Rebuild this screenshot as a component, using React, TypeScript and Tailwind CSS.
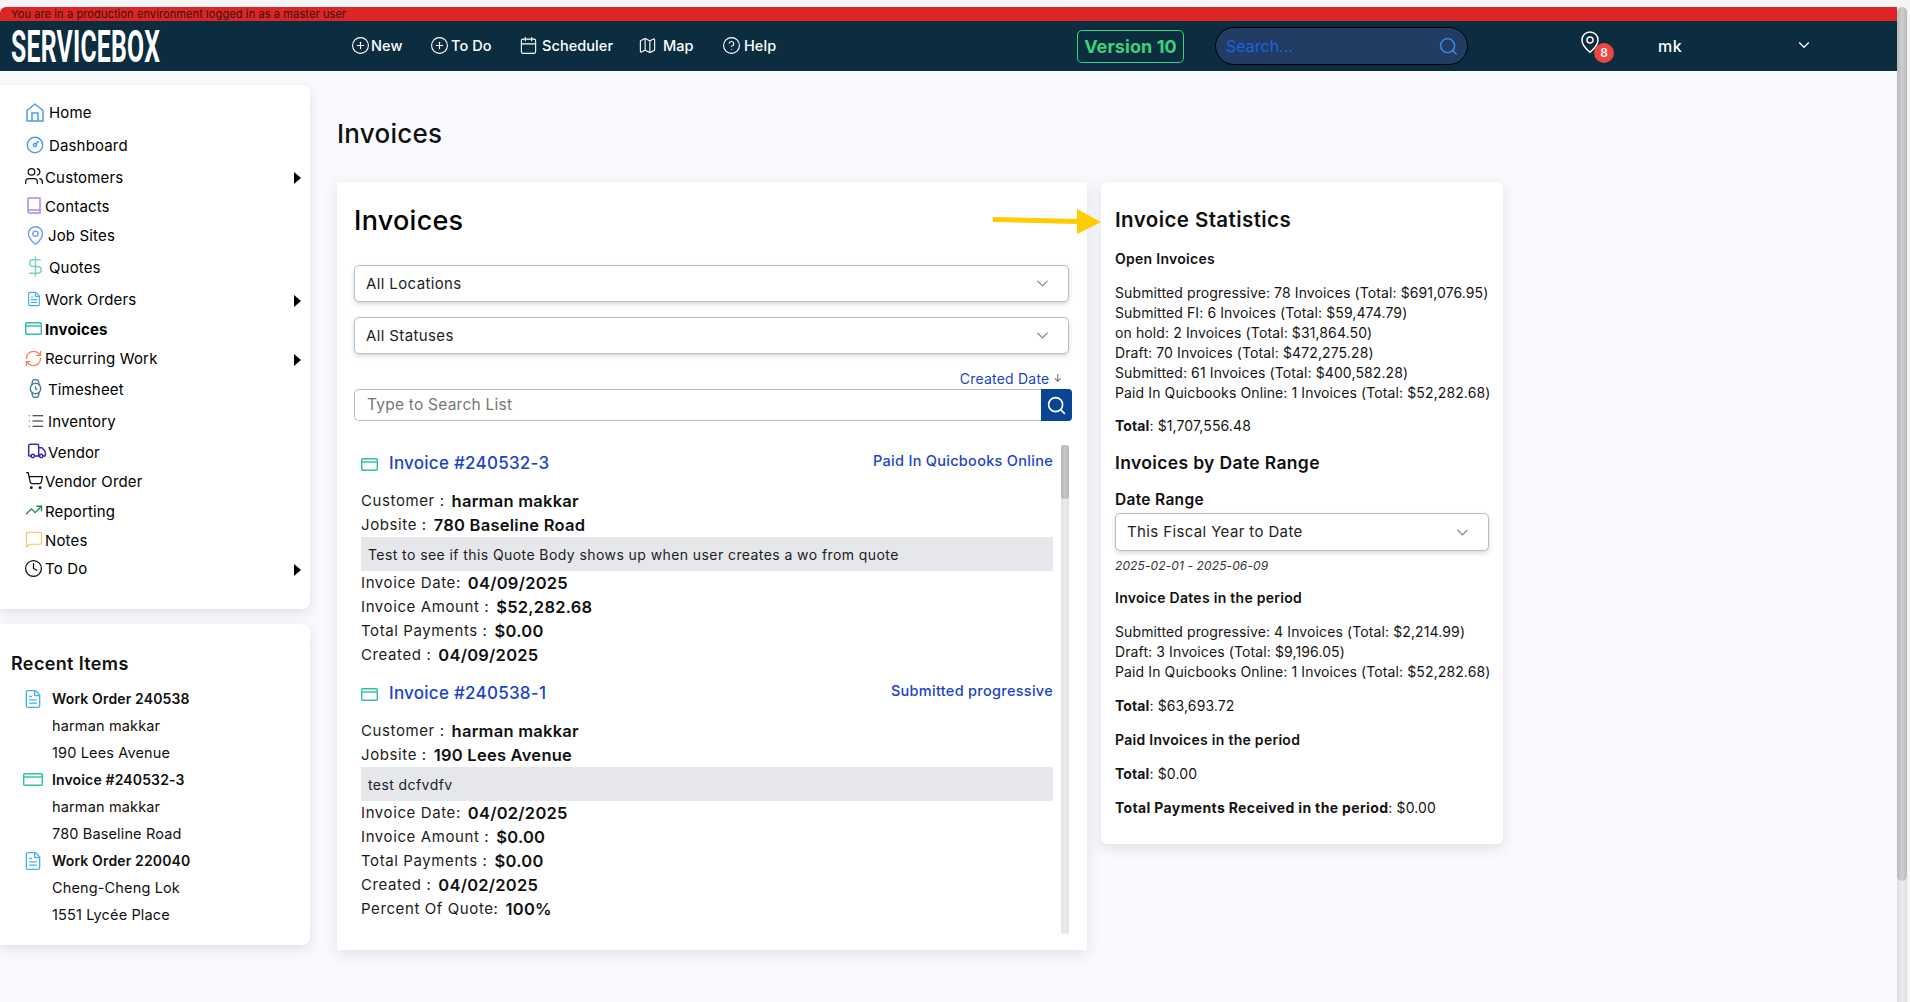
import {
  ChevronDown,
  CircleHelp,
  Calendar,
  Clock,
  DollarSign,
  FileText,
  List,
  Map as MapIcon,
  MapPin,
  MessageSquare,
  PlusCircle,
  RefreshCw,
  Search,
  ShoppingCart,
  TrendingUp,
  Truck,
  Users,
  Watch,
} from "lucide-react";
import type { ReactNode } from "react";

function HomeIcon() {
  return (
    <svg width="18" height="19" viewBox="0 0 18 19" fill="none" stroke="#4b9bf0" strokeWidth="1.5">
      <path d="M1 7.5 9 1l8 6.5V18H1z" strokeLinejoin="round" />
      <path d="M6 18v-8h6v8" />
    </svg>
  );
}

function GaugeIcon() {
  return (
    <svg width="18" height="18" viewBox="0 0 18 18" fill="none" stroke="#4b9bf0" strokeWidth="1.5">
      <circle cx="9" cy="9" r="7.7" />
      <circle cx="9" cy="9" r="1.6" />
      <path d="m10 8 2.5-3" />
    </svg>
  );
}

function BookIcon() {
  return (
    <svg width="14" height="17" viewBox="0 0 14 17" fill="none" stroke="#a78bea" strokeWidth="1.5">
      <path d="M1 13.5V2a1 1 0 0 1 1-1h11v15H2.6A1.6 1.6 0 0 1 1 14.2zM1 13h12" />
    </svg>
  );
}

function CardIcon({ w = 17 }: { w?: number }) {
  return (
    <svg width={w} height="13" viewBox={`0 0 ${w} 13`} fill="none" stroke="#2cc2a0" strokeWidth="1.4">
      <rect x="0.7" y="0.7" width={w - 1.4} height="11.6" rx="1" />
      <path d={`M1 4h${w - 2}`} />
    </svg>
  );
}

function Caret() {
  return (
    <svg width="7" height="12" viewBox="0 0 7 12" fill="#000">
      <path d="M0 0l7 6-7 6z" />
    </svg>
  );
}

type NavRow = { label: string; icon: ReactNode; h: string; iconBox: string; caret?: boolean; bold?: boolean };

const navRows: NavRow[] = [
  { label: "Home", icon: <HomeIcon />, h: "h-[33px]", iconBox: "w-[49px] pl-[26px] -mt-[3px]" },
  { label: "Dashboard", icon: <GaugeIcon />, h: "h-[33px]", iconBox: "w-[49px] pl-[26px] -mt-[3px]" },
  { label: "Customers", icon: <Users size={20} color="#111" strokeWidth={1.5} />, h: "h-[30px]", iconBox: "w-[45px] pl-[24px] -mt-[5px]", caret: true },
  { label: "Contacts", icon: <BookIcon />, h: "h-[28px]", iconBox: "w-[45px] pl-[27px] -mt-[3px]" },
  { label: "Job Sites", icon: <MapPin size={21} color="#6d9cf0" strokeWidth={1.6} />, h: "h-[31px]", iconBox: "w-[48px] pl-[25px] -mt-[3px]" },
  { label: "Quotes", icon: <DollarSign size={23} color="#74d6b8" strokeWidth={1.5} />, h: "h-[33px]", iconBox: "w-[49px] pl-[24px] -mt-[5px]" },
  { label: "Work Orders", icon: <FileText size={16} color="#40b0f5" strokeWidth={1.7} />, h: "h-[31px]", iconBox: "w-[45px] pl-[26px] -mt-[3px]", caret: true },
  { label: "Invoices", icon: <CardIcon />, h: "h-[29px]", iconBox: "w-[45px] pl-[25px] -mt-[4px]", bold: true },
  { label: "Recurring Work", icon: <RefreshCw size={19} color="#fa8260" strokeWidth={1.6} />, h: "h-[29px]", iconBox: "w-[45px] pl-[24px] -mt-[3px]", caret: true },
  { label: "Timesheet", icon: <Watch size={21} color="#4b7f96" strokeWidth={1.6} />, h: "h-[32px]", iconBox: "w-[48px] pl-[25px] -mt-[3px]" },
  { label: "Inventory", icon: <List size={18} color="#222" strokeWidth={1.6} />, h: "h-[32px]", iconBox: "w-[48px] pl-[27px] -mt-[3px]" },
  { label: "Vendor", icon: <Truck size={20} color="#3b2aa8" strokeWidth={1.8} />, h: "h-[30px]", iconBox: "w-[48px] pl-[27px] -mt-[4px]" },
  { label: "Vendor Order", icon: <ShoppingCart size={19} color="#111" strokeWidth={1.6} />, h: "h-[29px]", iconBox: "w-[45px] pl-[25px] -mt-[4px]" },
  { label: "Reporting", icon: <TrendingUp size={18} color="#1f8a5a" strokeWidth={1.8} />, h: "h-[30px]", iconBox: "w-[45px] pl-[25px] -mt-[5px]" },
  { label: "Notes", icon: <MessageSquare size={18} color="#f7bf5e" strokeWidth={1.6} />, h: "h-[28px]", iconBox: "w-[45px] pl-[25px] -mt-[4px]" },
  { label: "To Do", icon: <Clock size={19} color="#111" strokeWidth={1.6} />, h: "h-[29px]", iconBox: "w-[45px] pl-[24px] -mt-[3px]", caret: true },
];

const headerLinks = [
  { label: "New", icon: <PlusCircle size={19} strokeWidth={1.4} />, cls: "w-[79px] gap-[1px]" },
  { label: "To Do", icon: <PlusCircle size={19} strokeWidth={1.4} />, cls: "w-[89px] gap-[2px]" },
  { label: "Scheduler", icon: <Calendar size={19} strokeWidth={1.4} />, cls: "w-[119px] gap-[4px]" },
  { label: "Map", icon: <MapIcon size={19} strokeWidth={1.4} />, cls: "w-[84px] gap-[6px]" },
  { label: "Help", icon: <CircleHelp size={19} strokeWidth={1.4} />, cls: "w-[60px] gap-[3px]" },
];

const recent = [
  { title: "Work Order 240538", kind: "wo", lines: ["harman makkar", "190 Lees Avenue"] },
  { title: "Invoice #240532-3", kind: "inv", lines: ["harman makkar", "780 Baseline Road"] },
  { title: "Work Order 220040", kind: "wo", lines: ["Cheng-Cheng Lok", "1551 Lycée Place"] },
];

const openStats = [
  "Submitted progressive: 78 Invoices (Total: $691,076.95)",
  "Submitted FI: 6 Invoices (Total: $59,474.79)",
  "on hold: 2 Invoices (Total: $31,864.50)",
  "Draft: 70 Invoices (Total: $472,275.28)",
  "Submitted: 61 Invoices (Total: $400,582.28)",
  "Paid In Quicbooks Online: 1 Invoices (Total: $52,282.68)",
];

const periodStats = [
  "Submitted progressive: 4 Invoices (Total: $2,214.99)",
  "Draft: 3 Invoices (Total: $9,196.05)",
  "Paid In Quicbooks Online: 1 Invoices (Total: $52,282.68)",
];

function Field({ label, value }: { label: string; value: string }) {
  return (
    <div className="flex h-[24px] items-center gap-[7px] text-[15px] tracking-[0.04em] text-[#1c1c1c]">
      <span>{label}</span>
      <span className="text-[16.5px] font-semibold tracking-[0.015em] text-[#111]">{value}</span>
    </div>
  );
}

function Invoice(props: {
  number: string;
  status: string;
  customer: string;
  jobsite: string;
  note: string;
  date: string;
  amount: string;
  created: string;
  percent?: string;
}) {
  return (
    <div className="mb-[8px]">
      <div className="flex h-[38px] items-center justify-between">
        <div className="flex items-center gap-[11px]">
          <CardIcon />
          <span className="text-[17px] font-medium tracking-[0.015em] text-[#1a44c8]">Invoice #{props.number}</span>
        </div>
        <span className="-mt-[7px] text-[14.5px] font-medium tracking-[0.02em] text-[#1a44c8]">{props.status}</span>
      </div>
      <div className="mt-[6px]">
        <Field label="Customer :" value={props.customer} />
        <Field label="Jobsite :" value={props.jobsite} />
      </div>
      <div className="flex h-[34px] items-center bg-[#e5e7eb] pl-[7px] text-[14px] tracking-[0.03em] text-[#1c1c1c]">
        {props.note}
      </div>
      <Field label="Invoice Date:" value={props.date} />
      <Field label="Invoice Amount :" value={props.amount} />
      <Field label="Total Payments :" value="$0.00" />
      <Field label="Created :" value={props.created} />
      {props.percent && <Field label="Percent Of Quote:" value={props.percent} />}
    </div>
  );
}

function SelectBox({ label, cls }: { label: string; cls: string }) {
  return (
    <div className={`flex items-center justify-between rounded-[5px] border border-[#b4c0c8] bg-white pl-[11px] pr-[16px] text-[15px] tracking-[0.025em] text-[#222] shadow-[0_2px_5px_rgba(0,0,0,0.16)] ${cls}`}>
      <span className="pt-[1px]">{label}</span>
      <ChevronDown size={19} color="#7a8288" strokeWidth={1.5} />
    </div>
  );
}

export default function App() {
  return (
    <div className="flex h-[1002px] flex-col overflow-hidden bg-[#f4f4f4] font-['Inter',sans-serif]">
      <div className="h-[7px] shrink-0" />
      <div className="flex min-h-0 flex-1">
        <div className="flex min-w-0 flex-1 flex-col bg-[#f9fafd]">
          <div className="flex h-[14px] items-center rounded-tl-[6px] bg-[#dc2626] pl-[11px] text-[11px] leading-none tracking-[0.01em] text-[#3a1010]">
            You are in a production environment logged in as a master user
          </div>
          <header className="flex h-[50px] items-center bg-[#0c2d40] text-white">
            <div className="ml-[11px] w-[340px] origin-left scale-x-[0.55] font-['Roboto',sans-serif] text-[45px] font-bold leading-none tracking-[0.01em]">
              SERVICEBOX
            </div>
            <nav className="flex items-center">
              {headerLinks.map((link) => (
                <div key={link.label} className={`flex items-center text-[14.5px] font-medium tracking-[0.005em] ${link.cls}`}>
                  <span className="-mt-[2px]">{link.icon}</span>
                  {link.label}
                </div>
              ))}
            </nav>
            <div className="ml-[295px] flex h-[33px] w-[107px] items-center justify-center rounded-[5px] border border-[#3bd37a] text-[18px] font-bold tracking-[0.005em] text-[#3bd37a]">
              Version 10
            </div>
            <div className="ml-[31px] flex h-[38px] w-[253px] items-center justify-between rounded-full border border-black bg-[#223c63] pl-[10px] pr-[8px] text-[16px] text-[#1d63e0]">
              <span>Search...</span>
              <Search size={21} color="#3b8fe8" strokeWidth={1.6} />
            </div>
            <div className="relative ml-[112px] h-[24px] w-[20px]">
              <MapPin size={24} strokeWidth={1.5} className="-ml-[2px] -mt-[4px]" />
              <span className="absolute left-[14px] top-[9px] flex h-[20px] w-[20px] items-center justify-center rounded-full bg-[#ef4444] text-[12px] font-semibold">
                8
              </span>
            </div>
            <span className="ml-[58px] text-[16px] font-medium tracking-[0.03em]">mk</span>
            <ChevronDown size={18} strokeWidth={1.6} className="-mt-[3px] ml-[113px]" />
          </header>

          <div className="flex min-h-0 flex-1">
            <aside className="w-[310px] shrink-0 pt-[14px]">
              <div className="h-[524px] rounded-r-[8px] bg-white pt-[12px] shadow-[0_4px_12px_rgba(30,40,70,0.12)]">
                {navRows.map((row) => (
                  <div key={row.label} className={`flex items-center pr-[9px] text-[15px] tracking-[0.01em] text-black ${row.h} ${row.bold ? "font-bold" : ""}`}>
                    <span className={`shrink-0 ${row.iconBox}`}>{row.icon}</span>
                    <span className="flex-1">{row.label}</span>
                    {row.caret && <Caret />}
                  </div>
                ))}
              </div>
              <div className="mt-[15px] h-[321px] rounded-r-[8px] bg-white pt-[27px] shadow-[0_4px_12px_rgba(30,40,70,0.12)]">
                <h3 className="pl-[11px] text-[18px] font-semibold leading-[26px] tracking-[0.02em] text-[#111]">Recent Items</h3>
                <div className="mt-[8px]">
                  {recent.map((item) => (
                    <div key={item.title} className="text-[14.5px] tracking-[0.01em] text-[#111]">
                      <div className="flex h-[27px] items-center text-[14px] font-semibold">
                        <span className="flex w-[52px] justify-end pr-[9px]">
                          {item.kind === "wo" ? (
                            <FileText size={20} color="#40b0f5" strokeWidth={1.6} />
                          ) : (
                            <CardIcon w={20} />
                          )}
                        </span>
                        {item.title}
                      </div>
                      {item.lines.map((line) => (
                        <div key={line} className="flex h-[27px] items-center pl-[52px]">{line}</div>
                      ))}
                    </div>
                  ))}
                </div>
              </div>
            </aside>

            <main className="min-w-0 flex-1 pl-[27px]">
              <h1 className="flex h-[111px] items-center pt-[14px] text-[26px] font-medium tracking-[0.01em] text-[#111]">Invoices</h1>
              <div className="flex items-start gap-[14px]">
                <section className="h-[768px] w-[750px] bg-white pl-[17px] pr-[18px] shadow-[0_4px_14px_rgba(30,40,70,0.12)]">
                  <h2 className="flex h-[83px] items-center pb-[4px] text-[27px] font-medium tracking-[0.01em] text-black">Invoices</h2>
                  <SelectBox label="All Locations" cls="h-[37px]" />
                  <SelectBox label="All Statuses" cls="mt-[15px] h-[37px]" />
                  <div className="mt-[14px] flex h-[21px] items-center justify-end pr-[7px] text-[14px] tracking-[0.015em] text-[#1a44c8]">
                    Created Date <span className="ml-[4px] text-[10px] text-[#555]">↓</span>
                  </div>
                  <div className="-mr-[3px] flex h-[32px] items-stretch">
                    <div className="flex flex-1 items-center rounded-l-[5px] border border-r-0 border-[#b4c0c8] pl-[12px] text-[15.5px] tracking-[0.015em] text-[#777]">
                      Type to Search List
                    </div>
                    <div className="flex w-[31px] items-center justify-center rounded-r-[4px] bg-[#0a4595]">
                      <Search size={21} color="#fff" strokeWidth={1.8} />
                    </div>
                  </div>
                  <div className="mt-[24px] flex h-[489px] gap-[8px]">
                    <div className="ml-[7px] flex-1">
                      <Invoice
                        number="240532-3"
                        status="Paid In Quicbooks Online"
                        customer="harman makkar"
                        jobsite="780 Baseline Road"
                        note="Test to see if this Quote Body shows up when user creates a wo from quote"
                        date="04/09/2025"
                        amount="$52,282.68"
                        created="04/09/2025"
                      />
                      <Invoice
                        number="240538-1"
                        status="Submitted progressive"
                        customer="harman makkar"
                        jobsite="190 Lees Avenue"
                        note="test dcfvdfv"
                        date="04/02/2025"
                        amount="$0.00"
                        created="04/02/2025"
                        percent="100%"
                      />
                    </div>
                    <div className="w-[8px] rounded-[3px] bg-gradient-to-r from-[#e2e2e2] via-[#ececec] to-[#e2e2e2]">
                      <div className="h-[54px] rounded-[3px] bg-gradient-to-r from-[#b4b4b4] via-[#c8c8c8] to-[#b4b4b4]" />
                    </div>
                  </div>
                </section>

                <section className="relative h-[662px] w-[402px] rounded-[6px] bg-white px-[14px] text-[14px] tracking-[0.008em] text-[#151515] shadow-[0_4px_14px_rgba(30,40,70,0.12)]">
                  <div className="absolute -left-[108px] top-[27px]">
                    <svg width="108" height="26" viewBox="0 0 108 26" fill="#ffcc00">
                      <path d="M0 8 84 10V0l24 13-24 12V15L0 13z" />
                    </svg>
                  </div>
                  <h2 className="flex h-[66px] items-center pt-[10px] text-[20.5px] font-semibold tracking-[0.02em] text-[#111]">Invoice Statistics</h2>
                  <div className="flex h-[20px] items-center font-semibold tracking-[0.02em] text-[#111]">Open Invoices</div>
                  <div className="mt-[15px] leading-[20px]">
                    {openStats.map((line) => (
                      <div key={line} className="whitespace-nowrap">{line}</div>
                    ))}
                  </div>
                  <div className="mt-[13px] leading-[20px]"><b>Total</b>: $1,707,556.48</div>
                  <h3 className="mt-[15px] flex h-[24px] items-center text-[17.5px] font-semibold tracking-[0.02em] text-[#111]">Invoices by Date Range</h3>
                  <div className="mt-[14px] flex h-[22px] items-center text-[15.5px] font-semibold tracking-[0.02em] text-[#111]">Date Range</div>
                  <SelectBox label="This Fiscal Year to Date" cls="h-[38px] mt-[2px]" />
                  <div className="mt-[6px] text-[12px] italic leading-[18px] text-[#333]">2025-02-01 - 2025-06-09</div>
                  <div className="mt-[13px] font-semibold leading-[20px] tracking-[0.02em] text-[#111]">Invoice Dates in the period</div>
                  <div className="mt-[14px] leading-[20px]">
                    {periodStats.map((line) => (
                      <div key={line} className="whitespace-nowrap">{line}</div>
                    ))}
                  </div>
                  <div className="mt-[14px] leading-[20px]"><b>Total</b>: $63,693.72</div>
                  <div className="mt-[14px] font-semibold leading-[20px] tracking-[0.02em] text-[#111]">Paid Invoices in the period</div>
                  <div className="mt-[14px] leading-[20px]"><b>Total</b>: $0.00</div>
                  <div className="mt-[14px] leading-[20px]"><b className="tracking-[0.025em]">Total Payments Received in the period</b>: $0.00</div>
                </section>
              </div>
            </main>
          </div>
        </div>

        <div className="mr-[3px] w-[10px] shrink-0 rounded-t-[5px] bg-gradient-to-r from-[#dedede] via-[#ececec] to-[#dedede]">
          <div className="h-[874px] rounded-[5px] bg-gradient-to-r from-[#b8b8b8] via-[#cfcfcf] to-[#b8b8b8]" />
        </div>
      </div>
    </div>
  );
}
